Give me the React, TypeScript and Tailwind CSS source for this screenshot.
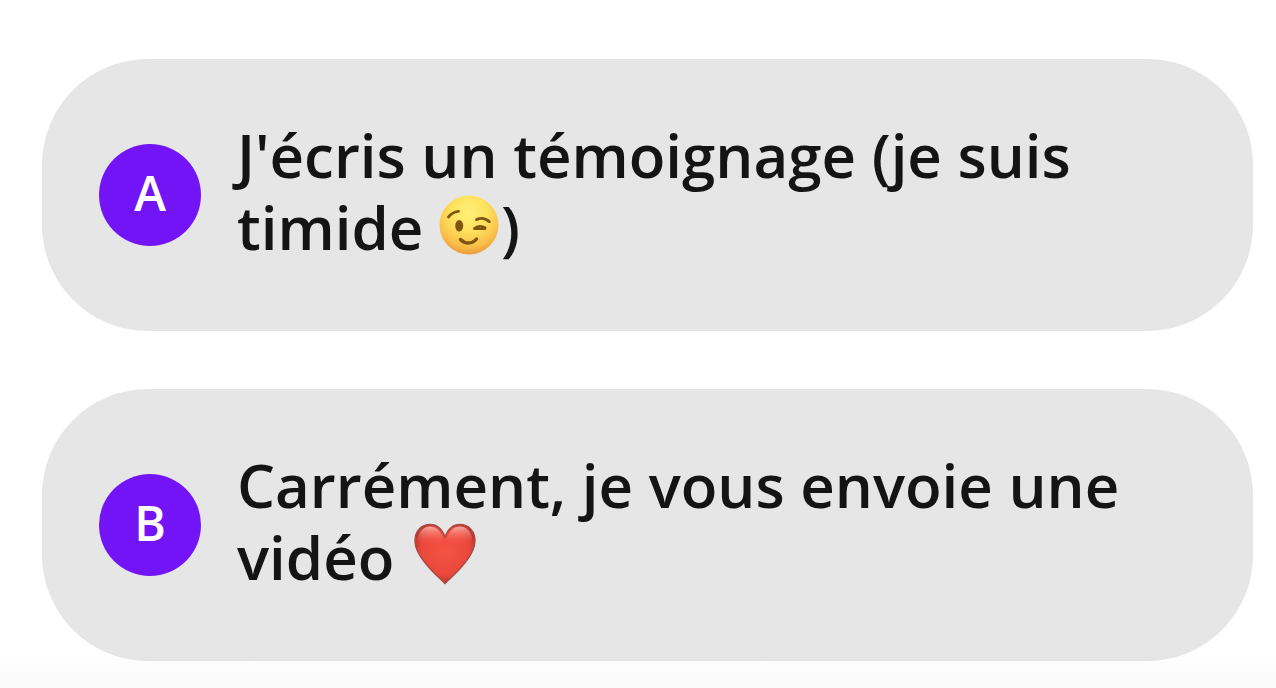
import type { ReactNode } from "react";

type Choice = {
  key: string;
  label: ReactNode;
};

function WinkEmoji() {
  return (
    <svg role="img" aria-label="😉" viewBox="0 0 60 60" className="mr-0.5 inline-block size-[60px] align-[-5px]">
      <defs>
        <radialGradient id="wink-face" cx="0.5" cy="0.3" r="0.72">
          <stop offset="0" stopColor="#fff27a" />
          <stop offset="0.45" stopColor="#fde05c" />
          <stop offset="0.8" stopColor="#f9bc48" />
          <stop offset="1" stopColor="#e8953a" />
        </radialGradient>
      </defs>
      <circle cx="30" cy="30" r="29.5" fill="url(#wink-face)" />
      <ellipse cx="20.2" cy="30.8" rx="4" ry="5.8" fill="#80540f" />
      <g fill="none" stroke="#80540f" strokeLinecap="round">
        <path d="M9.500 22C12 18.500 15 16.700 19.500 16.300" strokeWidth="2.800" />
        <path d="M37.500 24.600C41.500 22.800 46.500 23.200 50.300 26.600" strokeWidth="2.800" />
        <path d="M35.500 33.500C38.500 30.800 43 30.800 46 32.800" strokeWidth="3" />
        <path d="M36 34L46 34" strokeWidth="2" />
        <path d="M21.500 44.500C26 49.300 33 49.300 37.500 44" strokeWidth="3.400" />
      </g>
    </svg>
  );
}

function HeartEmoji() {
  return (
    <svg role="img" aria-label="❤️" viewBox="0 0 62 62" className="ml-1 inline-block size-[62px] align-[-5px]">
      <defs>
        <radialGradient id="heart-fill" cx="0.5" cy="0.45" r="0.62">
          <stop offset="0" stopColor="#f65344" />
          <stop offset="0.65" stopColor="#e9483c" />
          <stop offset="1" stopColor="#a82c28" />
        </radialGradient>
        <linearGradient id="heart-shine" x1="0" y1="0" x2="0" y2="1">
          <stop offset="0" stopColor="#ffc4ba" stopOpacity="0.8" />
          <stop offset="1" stopColor="#f65344" stopOpacity="0" />
        </linearGradient>
      </defs>
      <path
        d="M31 60.500C29 58 22 52.500 15 44.500C6 34.500 1 26.500 1 17.500C1 8 7.500 1.500 16 1.500C22.500 1.500 28 6 31 14C34 6 39.500 1.500 46 1.500C54.500 1.500 61 8 61 17.500C61 26.500 56 34.500 47 44.500C40 52.500 33 58 31 60.500Z"
        fill="url(#heart-fill)"
        stroke="#a84a46"
        strokeWidth="1.400"
      />
      <path d="M4 17C4.500 8 10 3.500 16 3.500C22 3.500 27 8 29.500 16C25 23 9 24 4 17Z" fill="url(#heart-shine)" />
      <path d="M58 17C57.500 8 52 3.500 46 3.500C40 3.500 35 8 32.500 16C37 23 53 24 58 17Z" fill="url(#heart-shine)" />
    </svg>
  );
}

const CHOICES: Choice[] = [
  {
    key: "A",
    label: (
      <>
        J'écris un témoignage (je suis timide <WinkEmoji />)
      </>
    ),
  },
  {
    key: "B",
    label: (
      <>
        Carrément, je vous envoie une vidéo <HeartEmoji />
      </>
    ),
  },
];

function ChoiceButton({ choice }: { choice: Choice }) {
  return (
    <button
      type="button"
      className="flex w-full items-center gap-9 rounded-[106px] bg-[#e6e6e6] pt-15 pr-20 pb-17 pl-[57px] text-left text-[#141414]"
    >
      <span className="mt-2 flex size-[102px] shrink-0 items-center justify-center rounded-full bg-[#7314f7] pb-1 text-5xl font-semibold text-white">
        {choice.key}
      </span>
      <span className="min-w-0 text-[60px] leading-[72px] font-semibold">{choice.label}</span>
    </button>
  );
}

export default function App() {
  return (
    <main className="relative min-h-screen bg-white pt-[59px] pr-[23px] pb-7 pl-[42px] font-['Open_Sans',sans-serif]">
      <div className="flex flex-col gap-[58px]">
        {CHOICES.map((choice) => (
          <ChoiceButton key={choice.key} choice={choice} />
        ))}
      </div>
      <div className="pointer-events-none absolute inset-x-0 bottom-0 h-10 bg-linear-to-b from-transparent to-black/2" />
    </main>
  );
}
